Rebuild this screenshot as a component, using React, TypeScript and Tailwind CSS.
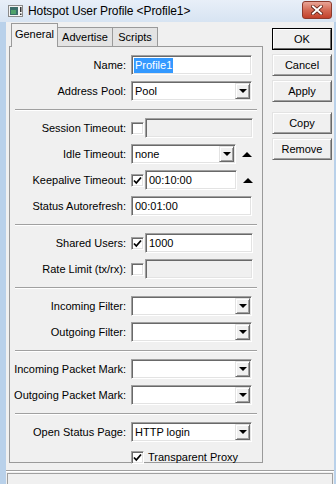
import type { ReactNode } from "react";

const sunken =
  "border border-t-[#a0a0a0] border-l-[#a0a0a0] border-r-[#ffffff] border-b-[#ffffff] shadow-[inset_1px_1px_0_#696969,inset_-1px_-1px_0_#e3e3e3]";
const raised =
  "border border-t-[#e3e3e3] border-l-[#e3e3e3] border-r-[#696969] border-b-[#696969] shadow-[inset_1px_1px_0_#ffffff,inset_-1px_-1px_0_#a0a0a0]";

function DownArrow() {
  return <div className="h-0 w-0 border-x-[4px] border-t-[4px] border-x-transparent border-t-black" />;
}

function UpArrow() {
  return (
    <div className="ml-[6px] h-0 w-0 border-x-[5px] border-b-[5px] border-x-transparent border-b-black" />
  );
}

function Field({
  w,
  text,
  selected,
  disabled,
  dropdown,
}: {
  w: string;
  text?: string;
  selected?: boolean;
  disabled?: boolean;
  dropdown?: boolean;
}) {
  return (
    <div
      className={`flex h-[20px] items-center ${w} ${sunken} ${disabled ? "bg-[#f0f0f0]" : "bg-white"}`}
    >
      {text && (
        <span
          className={`ml-[2px] px-[1px] leading-[15px] ${selected ? "bg-[#3399ff] text-white" : ""}`}
        >
          {text}
        </span>
      )}
      {dropdown && (
        <div className={`ml-auto mr-[1px] flex h-[16px] w-[15px] items-center justify-center bg-[#f0f0f0] ${raised}`}>
          <DownArrow />
        </div>
      )}
    </div>
  );
}

function Check({ on }: { on?: boolean }) {
  return (
    <div className={`flex h-[13px] w-[13px] shrink-0 items-center justify-center bg-white ${sunken}`}>
      {on && (
        <svg width="9" height="9" viewBox="0 0 9 9">
          <path d="M1 4.5 L3.3 7 L8 1.5" fill="none" stroke="#000" strokeWidth="1.8" />
        </svg>
      )}
    </div>
  );
}

function Row({ label, children }: { label: string; children: ReactNode }) {
  return (
    <div className="flex h-[26px] items-center">
      <div className="w-[116px] whitespace-nowrap text-right">{label}</div>
      <div className="ml-[5px] flex items-center">{children}</div>
    </div>
  );
}

function Sep() {
  return <div className="mx-[5px] mb-[4px] mt-[5px] h-[2px] border-b border-t border-b-white border-t-[#a0a0a0]" />;
}

function Btn({ label, def }: { label: string; def?: boolean }) {
  return (
    <div className={`h-[22px] w-[60px] ${def ? "border border-black" : ""}`}>
      <div
        className={`flex h-full w-full items-center justify-center bg-[#f0f0f0] ${def ? "border border-t-white border-l-white border-r-[#696969] border-b-[#696969]" : raised}`}
      >
        {label}
      </div>
    </div>
  );
}

export default function App() {
  return (
    <div className="flex h-[484px] w-[336px] flex-col overflow-hidden bg-[#b9d1ea] font-['Liberation_Sans',Arial,sans-serif] text-[11px] text-black">
      {/* title bar */}
      <div className="flex h-[22px] shrink-0 items-center bg-gradient-to-b from-[#e8eff8] to-[#d7e4f2]">
        <svg className="ml-[8px]" width="15" height="12" viewBox="0 0 15 12">
          <rect x="0.5" y="0.5" width="14" height="11" fill="#f4f4f4" stroke="#8a8a8a" />
          <rect x="2" y="2" width="8" height="8" fill="#3c6e6a" />
          <rect x="3" y="5" width="5" height="4" fill="#4fa36a" />
          <rect x="12" y="2" width="1.5" height="5" fill="#333" />
          <rect x="12" y="8.5" width="1.5" height="1.5" fill="#333" />
        </svg>
        <span className="ml-[5px] text-[12px] tracking-[-0.1px] text-black">
          Hotspot User Profile &lt;Profile1&gt;
        </span>
        <div className="ml-auto mr-[4px] mt-[1px] flex h-[18px] w-[30px] items-center justify-center self-start rounded-[3px] border border-[#8d3a2c] bg-gradient-to-b from-[#e8a597] via-[#d46a55] to-[#c2402a]">
          <svg width="12" height="10" viewBox="0 0 12 10">
            <path d="M2 1.5 L10 8.5 M10 1.5 L2 8.5" stroke="#5a1d12" strokeWidth="3.6" strokeLinecap="square" />
            <path d="M2 1.5 L10 8.5 M10 1.5 L2 8.5" stroke="#ffffff" strokeWidth="2" strokeLinecap="square" />
          </svg>
        </div>
      </div>

      {/* body */}
      <div className="ml-[6px] mr-[2px] flex shrink-0 flex-col bg-[#f0f0f0] pb-[20px]">
        <div className="flex">
          {/* tabs + panel */}
          <div className="ml-[3px] mt-[1px] flex w-[254px] flex-col">
            <div className="flex h-[23px] items-end pl-[2px]">
              <div className="relative z-10 -mb-px flex h-[24px] w-[47px] items-center justify-center border border-b-0 border-[#9a9a9a] bg-[#f0f0f0] pb-[2px]">
                General
              </div>
              <div className="flex h-[19px] w-[55px] items-center justify-center border border-b-0 border-l-0 border-[#9a9a9a] bg-[#e3e3e3]">
                Advertise
              </div>
              <div className="flex h-[19px] w-[45px] items-center justify-center border border-b-0 border-l-0 border-[#9a9a9a] bg-[#e3e3e3]">
                Scripts
              </div>
            </div>
            <div className="h-[417px] border border-[#9a9a9a] pt-[5px]">
              <Row label="Name:">
                <Field w="w-[121px]" text="Profile1" selected />
              </Row>
              <Row label="Address Pool:">
                <Field w="w-[121px]" text="Pool" dropdown />
              </Row>
              <Sep />
              <Row label="Session Timeout:">
                <Check />
                <div className="ml-[1px]">
                  <Field w="w-[108px]" disabled />
                </div>
              </Row>
              <Row label="Idle Timeout:">
                <Field w="w-[105px]" text="none" dropdown />
                <UpArrow />
              </Row>
              <Row label="Keepalive Timeout:">
                <Check on />
                <div className="ml-[1px]">
                  <Field w="w-[92px]" text="00:10:00" />
                </div>
                <UpArrow />
              </Row>
              <Row label="Status Autorefresh:">
                <Field w="w-[121px]" text="00:01:00" />
              </Row>
              <Sep />
              <Row label="Shared Users:">
                <Check on />
                <div className="ml-[1px]">
                  <Field w="w-[108px]" text="1000" />
                </div>
              </Row>
              <Row label="Rate Limit (tx/rx):">
                <Check />
                <div className="ml-[1px]">
                  <Field w="w-[108px]" disabled />
                </div>
              </Row>
              <Sep />
              <Row label="Incoming Filter:">
                <Field w="w-[121px]" dropdown />
              </Row>
              <Row label="Outgoing Filter:">
                <Field w="w-[121px]" dropdown />
              </Row>
              <Sep />
              <Row label="Incoming Packet Mark:">
                <Field w="w-[121px]" dropdown />
              </Row>
              <Row label="Outgoing Packet Mark:">
                <Field w="w-[121px]" dropdown />
              </Row>
              <Sep />
              <Row label="Open Status Page:">
                <Field w="w-[121px]" text="HTTP login" dropdown />
              </Row>
              <div className="flex h-[24px] items-center pl-[121px]">
                <Check on />
                <span className="ml-[4px]">Transparent Proxy</span>
              </div>
            </div>
          </div>

          {/* buttons */}
          <div className="ml-[9px] mt-[6px] flex flex-col gap-[4px]">
            <Btn label="OK" def />
            <Btn label="Cancel" />
            <Btn label="Apply" />
            <div className="mt-[6px]">
              <Btn label="Copy" />
            </div>
            <Btn label="Remove" />
          </div>
        </div>

        {/* status bar */}
        <div className="mt-[7px] h-[2px] border-b border-t border-b-white border-t-[#a0a0a0]" />
        <div className="ml-[1px] mr-[1px] mt-[1px] h-[20px] border border-[#a0a0a0] bg-[#f0f0f0]" />
      </div>
    </div>
  );
}
